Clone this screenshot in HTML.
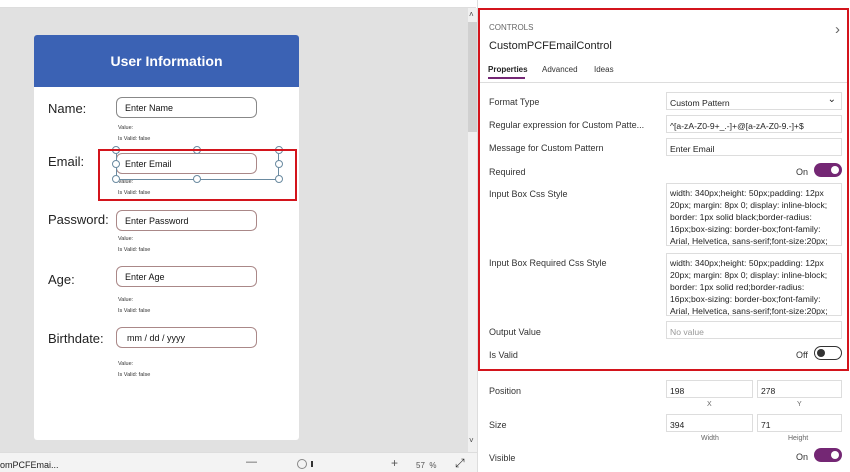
<!DOCTYPE html>
<html><head><style>
*{margin:0;padding:0;box-sizing:border-box}
body{width:850px;height:472px;overflow:hidden;background:#fff;font-family:"Liberation Sans",sans-serif;position:relative;font-size:9px;color:#333}
.a{position:absolute}
.lbl{position:absolute;font-size:13px;color:#222;font-family:"Liberation Sans",sans-serif}
.inp{position:absolute;left:116px;width:141px;height:21px;border:1px solid #a88;border-radius:6px;font-size:9px;padding:5px 0 0 8px;color:#111}
.sm{position:absolute;left:118px;font-size:5.5px;color:#333}
.pl{position:absolute;left:489px;font-size:9px;color:#333}
.box{position:absolute;left:666px;width:176px;border:1px solid #ddd;background:#fff;font-size:8.6px;padding:4px 3px;color:#222;line-height:12px}
.tog{position:absolute;left:814px;width:28px;height:14px;border-radius:7px;background:#742774}
.tog::after{content:"";position:absolute;right:3px;top:3px;width:8px;height:8px;border-radius:50%;background:#fff}
</style></head><body>
<div class="a" style="left:0;top:0;width:476px;height:8px;background:#fff;border-bottom:1px solid #ddd"></div>
<div class="a" style="left:0;top:8px;width:468px;height:444px;background:#e1e1e1"></div>
<div class="a" style="left:468px;top:8px;width:9px;height:444px;background:#f0f0f0"></div>
<div class="a" style="left:468px;top:22px;width:9px;height:110px;background:#d0d0d0"></div>
<div class="a" style="left:469px;top:10px;font-size:8px;color:#444">˄</div>
<div class="a" style="left:469px;top:436px;font-size:8px;color:#444">˅</div>
<div class="a" style="left:34px;top:35px;width:265px;height:405px;background:#fff;border-radius:3px"></div>
<div class="a" style="left:34px;top:35px;width:265px;height:52px;background:#3b62b4;border-radius:3px 3px 0 0;color:#fff;font-size:14px;font-weight:bold;text-align:center;line-height:52px">User Information</div>
<div class="lbl" style="left:48px;top:101px">Name:</div>
<div class="inp" style="top:97px;border-color:#888">Enter Name</div>
<div class="sm" style="top:125px">Value:</div><div class="sm" style="top:136px">Is Valid: false</div>
<div class="lbl" style="left:48px;top:154px">Email:</div>
<div class="inp" style="top:153px">Enter Email</div>
<div class="sm" style="top:179px">Value:</div><div class="sm" style="top:190px">Is Valid: false</div>
<div class="a" style="left:116px;top:150px;width:163px;height:30px;border:1px solid #6a8aa0"></div>
<svg class="a" style="left:110px;top:144px" width="176" height="42"><g fill="#fff" stroke="#6a8aa0" stroke-width="1"><circle cx="6" cy="6" r="3.5"/><circle cx="87" cy="6" r="3.5"/><circle cx="169" cy="6" r="3.5"/><circle cx="6" cy="20" r="3.5"/><circle cx="169" cy="20" r="3.5"/><circle cx="6" cy="35" r="3.5"/><circle cx="87" cy="35" r="3.5"/><circle cx="169" cy="35" r="3.5"/></g></svg>
<div class="a" style="left:98px;top:149px;width:199px;height:52px;border:2px solid #d3141c"></div>
<div class="lbl" style="left:48px;top:212px">Password:</div>
<div class="inp" style="top:210px">Enter Password</div>
<div class="sm" style="top:236px">Value:</div><div class="sm" style="top:247px">Is Valid: false</div>
<div class="lbl" style="left:48px;top:272px">Age:</div>
<div class="inp" style="top:266px">Enter Age</div>
<div class="sm" style="top:297px">Value:</div><div class="sm" style="top:308px">Is Valid: false</div>
<div class="lbl" style="left:48px;top:331px">Birthdate:</div>
<div class="inp" style="top:327px;padding-left:10px">mm / dd / yyyy</div>
<div class="sm" style="top:361px">Value:</div><div class="sm" style="top:372px">Is Valid: false</div>
<div class="a" style="left:0;top:452px;width:477px;height:20px;background:#f3f3f3;border-top:1px solid #ddd"></div>
<div class="a" style="left:0;top:460px;font-size:9px;color:#222">omPCFEmai...</div>
<div class="a" style="left:246px;top:456px;font-size:11px;color:#555">—</div>
<div class="a" style="left:297px;top:459px;width:10px;height:10px;border:1px solid #888;border-radius:50%"></div>
<div class="a" style="left:311px;top:461px;width:2px;height:6px;background:#333"></div>
<div class="a" style="left:391px;top:456px;font-size:12px;color:#555">+</div>
<div class="a" style="left:416px;top:461px;font-size:8px;color:#555">57 &nbsp;%</div>
<div class="a" style="left:455px;top:456px;font-size:12px;color:#333">⤢</div>
<div class="a" style="left:477px;top:0;width:373px;height:472px;background:#fff;border-left:1px solid #ddd"></div>
<div class="a" style="left:478px;top:8px;width:371px;height:363px;border:2px solid #d3141c"></div>
<div class="a" style="left:489px;top:23px;font-size:8px;color:#666">CONTROLS</div>
<div class="a" style="left:835px;top:21px;font-size:15px;color:#666">›</div>
<div class="a" style="left:489px;top:40px;font-size:11px;color:#222">CustomPCFEmailControl</div>
<div class="a" style="left:488px;top:65px;font-size:8px;font-weight:bold;color:#222">Properties</div>
<div class="a" style="left:488px;top:77px;width:37px;height:2px;background:#742774"></div>
<div class="a" style="left:542px;top:65px;font-size:8px;color:#333">Advanced</div>
<div class="a" style="left:594px;top:65px;font-size:8px;color:#333">Ideas</div>
<div class="a" style="left:480px;top:82px;width:367px;height:1px;background:#ddd"></div>
<div class="pl" style="top:97px">Format Type</div>
<div class="box" style="top:92px;height:18px">Custom Pattern<span style="position:absolute;right:5px;top:1px;font-size:10px">⌄</span></div>
<div class="pl" style="top:120px">Regular expression for Custom Patte...</div>
<div class="box" style="top:115px;height:18px">^[a-zA-Z0-9+_.-]+@[a-zA-Z0-9.-]+$</div>
<div class="pl" style="top:143px">Message for Custom Pattern</div>
<div class="box" style="top:138px;height:18px">Enter Email</div>
<div class="pl" style="top:167px">Required</div>
<div class="a" style="left:796px;top:167px;font-size:9px">On</div>
<div class="tog" style="top:163px"></div>
<div class="pl" style="top:189px">Input Box Css Style</div>
<div class="box" style="top:183px;height:63px;overflow:hidden;padding-top:3px">width: 340px;height: 50px;padding: 12px 20px; margin: 8px 0; display: inline-block; border: 1px solid black;border-radius: 16px;box-sizing: border-box;font-family: Arial, Helvetica, sans-serif;font-size:20px;</div>
<div class="pl" style="top:258px">Input Box Required Css Style</div>
<div class="box" style="top:253px;height:63px;overflow:hidden;padding-top:3px">width: 340px;height: 50px;padding: 12px 20px; margin: 8px 0; display: inline-block; border: 1px solid red;border-radius: 16px;box-sizing: border-box;font-family: Arial, Helvetica, sans-serif;font-size:20px;</div>
<div class="pl" style="top:327px">Output Value</div>
<div class="box" style="top:321px;height:18px;color:#999">No value</div>
<div class="pl" style="top:350px">Is Valid</div>
<div class="a" style="left:796px;top:350px;font-size:9px">Off</div>
<div class="a" style="left:814px;top:346px;width:28px;height:14px;border-radius:7px;border:1px solid #333"></div>
<div class="a" style="left:817px;top:349px;width:8px;height:8px;border-radius:50%;background:#333"></div>
<div class="pl" style="top:386px">Position</div>
<div class="box" style="top:380px;width:87px;height:18px">198</div>
<div class="box" style="left:757px;top:380px;width:85px;height:18px">278</div>
<div class="a" style="left:707px;top:401px;font-size:7px;color:#666">X</div>
<div class="a" style="left:797px;top:401px;font-size:7px;color:#666">Y</div>
<div class="pl" style="top:420px">Size</div>
<div class="box" style="top:414px;width:87px;height:18px">394</div>
<div class="box" style="left:757px;top:414px;width:85px;height:18px">71</div>
<div class="a" style="left:701px;top:435px;font-size:7px;color:#666">Width</div>
<div class="a" style="left:788px;top:435px;font-size:7px;color:#666">Height</div>
<div class="pl" style="top:453px">Visible</div>
<div class="a" style="left:796px;top:452px;font-size:9px">On</div>
<div class="tog" style="top:448px"></div>
</body></html>
